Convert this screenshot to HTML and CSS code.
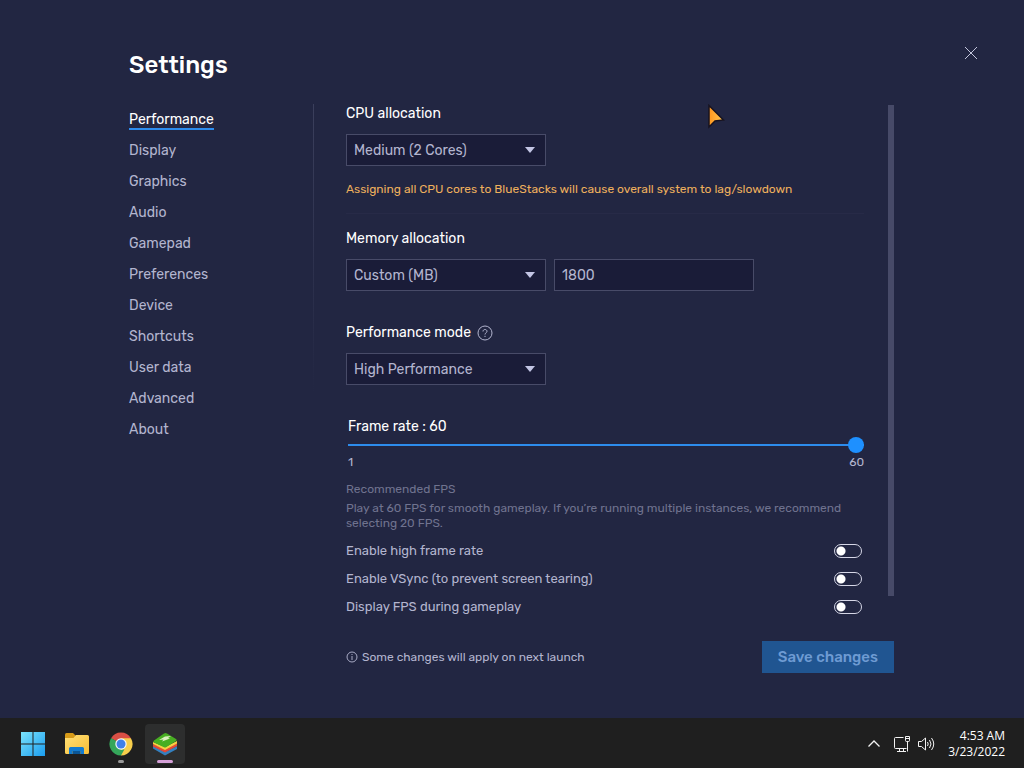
FILE: index.html
```html
<!DOCTYPE html>
<html lang="en">
<head>
    <meta charset="UTF-8">
    <meta name="viewport" content="width=device-width, initial-scale=1.0">
    <title>Settings</title>
    <link rel="stylesheet" href="styles.css">
</head>
<body>
    <main class="window">
        <header class="window-header">
            <h1>Settings</h1>
            <button class="close-button" aria-label="Close">
                <svg width="14" height="14" viewBox="0 0 14 14"><path d="M1 1l12 12M13 1L1 13" stroke="#c3c5dc" fill="none"/></svg>
            </button>
        </header>

        <div class="settings">
            <!-- Section list -->
            <nav class="sidebar">
                <ul>
                    <li><a href="#performance" class="active">Performance</a></li>
                    <li><a href="#display">Display</a></li>
                    <li><a href="#graphics">Graphics</a></li>
                    <li><a href="#audio">Audio</a></li>
                    <li><a href="#gamepad">Gamepad</a></li>
                    <li><a href="#preferences">Preferences</a></li>
                    <li><a href="#device">Device</a></li>
                    <li><a href="#shortcuts">Shortcuts</a></li>
                    <li><a href="#user-data">User data</a></li>
                    <li><a href="#advanced">Advanced</a></li>
                    <li><a href="#about">About</a></li>
                </ul>
            </nav>

            <div class="separator"></div>

            <div class="panel">
                <div class="panel-scroll">
                    <form class="options" id="performance">
                        <section class="group group-cpu">
                            <label class="title" for="cpu">CPU allocation</label>
                            <div class="fields">
                                <select id="cpu"><option>Medium (2 Cores)</option></select>
                            </div>
                            <p class="warning">Assigning all CPU cores to BlueStacks will cause overall system to lag/slowdown</p>
                        </section>

                        <section class="group">
                            <label class="title" for="memory">Memory allocation</label>
                            <div class="fields">
                                <select id="memory"><option>Custom (MB)</option></select>
                                <input type="text" value="1800" aria-label="Memory in MB">
                            </div>
                        </section>

                        <section class="group">
                            <div class="title-row">
                                <label class="title" for="mode">Performance mode</label>
                                <svg width="16" height="16" viewBox="0 0 16 16" fill="none" stroke="#b3b5cf">
                                    <circle cx="8" cy="8" r="7"/>
                                    <path d="M6 6.5c0-1.3.9-2 2-2s2 .7 2 1.8c0 1.5-2 1.500-2 3.200M8 10.800v1.200"/>
                                </svg>
                            </div>
                            <div class="fields">
                                <select id="mode"><option>High Performance</option></select>
                            </div>
                        </section>

                        <section class="frame-rate">
                            <label class="title" for="fps">Frame rate : 60</label>
                            <input type="range" id="fps" min="1" max="60" value="60">
                            <div class="range-limits"><span>1</span><span>60</span></div>
                        </section>

                        <section class="hint">
                            <h2>Recommended FPS</h2>
                            <p>Play at 60 FPS for smooth gameplay. If you’re running multiple instances, we recommend selecting 20 FPS.</p>
                        </section>

                        <section class="toggles">
                            <label>Enable high frame rate <input type="checkbox"></label>
                            <label>Enable VSync (to prevent screen tearing) <input type="checkbox"></label>
                            <label>Display FPS during gameplay <input type="checkbox"></label>
                        </section>
                    </form>
                    <div class="scrollbar"></div>
                </div>

                <footer class="panel-footer">
                    <p class="note">
                        <svg width="12" height="12" viewBox="0 0 12 12" fill="none" stroke="#a9abc6">
                            <circle cx="6" cy="6" r="5"/>
                            <path d="M6 5v4M6 3v1"/>
                        </svg>
                        Some changes will apply on next launch
                    </p>
                    <button class="save-button">Save changes</button>
                </footer>
            </div>
        </div>

        <svg class="cursor" width="18" height="25" viewBox="0 0 18 25">
            <defs>
                <linearGradient id="cursor-fill" x2="1" y2="0"><stop stop-color="#ff961e"/><stop offset="1" stop-color="#ffc751"/></linearGradient>
            </defs>
            <path d="M2 1.500L16.500 16L8 17L2 23z" fill="url(#cursor-fill)" stroke="#171321" stroke-width="1.500"/>
        </svg>
    </main>

    <!-- Taskbar -->
    <div class="taskbar">
        <div class="apps">
            <button class="app" aria-label="Start">
                <svg width="24" height="24" viewBox="0 0 24 24">
                    <defs><linearGradient id="win" x2="1" y2="1"><stop stop-color="#7be3fb"/><stop offset="1" stop-color="#1a9df0"/></linearGradient></defs>
                    <path d="M0 0h11.500v11.500H0zM12.500 0H24v11.500H12.500zM0 12.500h11.500V24H0zM12.500 12.500H24V24H12.500z" fill="url(#win)"/>
                </svg>
            </button>
            <button class="app" aria-label="File Explorer">
                <svg width="26" height="24" viewBox="0 0 26 24">
                    <defs><linearGradient id="folder" x2="1" y2="1"><stop stop-color="#ffe077"/><stop offset="1" stop-color="#f7bd35"/></linearGradient></defs>
                    <path d="M1 6V2.500Q1 1 2.500 1H9l3 3v4H1z" fill="#d79b18"/>
                    <path d="M1 6h8.500L12 3h11.500Q25 3 25 4.500V20.500Q25 22 23.500 22H2.500Q1 22 1 20.500z" fill="url(#folder)"/>
                    <path d="M5 22v-5.500Q5 15 6.500 15h12Q20 15 20 16.500V22h-3.500v-3h-8v3z" fill="#127bd0"/>
                    <path d="M8.500 22v-3h8v3z" fill="#0b5696"/>
                </svg>
            </button>
            <button class="app running" aria-label="Google Chrome">
                <svg width="24" height="24" viewBox="0 0 24 24">
                    <path d="M12 12L2.040 6.250A11.500 11.500 0 0 1 21.960 6.250z" fill="#d94f45"/>
                    <path d="M12 12L2.040 6.250A11.500 11.500 0 0 0 12 23.500z" fill="#35a65a"/>
                    <path d="M12 12V23.500A11.500 11.500 0 0 0 21.960 6.250z" fill="#f7ce4b"/>
                    <path d="M12 6.250h9.960L17 14.900z" fill="#f7ce4b"/>
                    <path d="M2.040 6.250L7 14.900L12 12z" fill="#35a65a"/>
                    <path d="M12 23.500L17 14.900L12 12z" fill="#f7ce4b"/>
                    <path d="M7 14.900L12 17.800L15.500 17.200L12 23.500z" fill="#35a65a"/>
                    <circle cx="12" cy="12" r="5.700" fill="#f4f7fb"/>
                    <circle cx="12" cy="12" r="4.500" fill="#3f80e8"/>
                </svg>
            </button>
            <button class="app running current" aria-label="BlueStacks">
                <svg width="26" height="24" viewBox="0 0 26 24">
                    <path d="M1 14v2.500l12 7 12-6.500v-3l-12 6z" fill="#3480bf"/>
                    <path d="M1 12v2.500l12 6 12-6.500v-3l-12 6z" fill="#e54a35"/>
                    <path d="M1 10v2l12 6 12-6.500V9l-12 6z" fill="#f6d143"/>
                    <path d="M12 1.500q1.500-.8 3 0L24 7q1.500 1 0 2l-10 6.200q-1 .6-2 0L2 10.500q-1.500-1 0-2z" fill="#48ae22"/>
                    <path d="M7 8l6-3.500 6-.5-3 2 2 .5-8 3 1.500-2z" fill="#dcf0c0"/>
                </svg>
            </button>
        </div>

        <div class="tray">
            <button class="tray-button" aria-label="Show hidden icons">
                <svg width="12" height="8" viewBox="0 0 12 8"><path d="M.5 6.500L6 1l5.500 5.500" stroke="#f2f2f2" stroke-width="1.300" fill="none"/></svg>
            </button>
            <button class="tray-button tray-status" aria-label="Network and volume">
                <svg width="18" height="18" viewBox="0 0 18 18" fill="none" stroke="#f2f2f2">
                    <path d="M10.500 2.500h-8q-1 0-1 1v9q0 1 1 1h11M4 16.500h9M6.500 13.500v3M10.500 13.500v3"/>
                    <path d="M12.500 1.500h4v4q0 1-1 1h-2q-1 0-1-1zM12.500 3.500h4M14.500 6.500v10"/>
                </svg>
                <svg width="18" height="18" viewBox="0 0 18 18" fill="none" stroke="#f2f2f2">
                    <path d="M1.500 6.500h3L8.500 3v12l-4-3.500h-3z" stroke-linejoin="round"/>
                    <path d="M10.500 7q1.400 2 0 4M12.500 5q3 4 0 8M14.500 3q4.500 6 0 12"/>
                </svg>
            </button>
            <div class="clock">
                <div>4:53 AM</div>
                <div>3/23/2022</div>
            </div>
        </div>
    </div>
</body>
</html>
```
FILE: styles.css
```css
* {
    box-sizing: border-box;
}

body {
    margin: 0;
    min-height: 100vh;
    display: flex;
    flex-direction: column;
    background: #222642;
    color: #b3b5cf;
    font-family: "Rubik", "Roboto", sans-serif;
    font-size: 14px;
    line-height: 20px;
}

h1, h2, p, ul {
    margin: 0;
    padding: 0;
}

button {
    padding: 0;
    border: none;
    background: none;
    color: inherit;
    font: inherit;
    cursor: pointer;
}

svg {
    display: block;
}

.window {
    position: relative;
    flex: 1;
    padding: 38px 38px 40px 129px;
}

/* Header */
.window-header {
    display: flex;
    justify-content: space-between;
    align-items: flex-start;
    height: 66px;
}

h1 {
    padding-top: 11px;
    color: #fff;
    font-size: 24px;
    font-weight: 500;
    line-height: 32px;
}

.close-button {
    width: 30px;
    height: 30px;
    display: grid;
    place-items: center;
}

/* Section list and panel */
.settings {
    display: flex;
    padding-right: 92px;
}

.sidebar {
    width: 184px;
    flex-shrink: 0;
}

.sidebar ul {
    list-style: none;
}

.sidebar li {
    height: 31px;
    padding-top: 6px;
}

.sidebar a {
    display: inline-block;
    height: 20px;
    color: inherit;
    text-decoration: none;
}

.sidebar a.active {
    color: #fff;
    border-bottom: 2px solid #2d8ced;
}

.separator {
    width: 1px;
    margin-right: 32px;
    background: linear-gradient(#3b3f5c, #222642 288px);
}

.panel {
    flex: 1;
    min-width: 0;
}

.panel-scroll {
    display: flex;
    justify-content: space-between;
    gap: 24px;
}

.options {
    flex: 1;
}

.scrollbar {
    width: 6px;
    height: 491px;
    margin-top: 1px;
    background: #474a68;
}

/* Form groups */
.group {
    margin-bottom: 32px;
}

.group-cpu {
    margin-bottom: 15px;
    padding-bottom: 15px;
    border-bottom: 1px solid #272a47;
}

.title {
    display: block;
    color: #fff;
}

.title-row {
    display: flex;
    align-items: center;
    gap: 6px;
}

.fields {
    display: flex;
    gap: 8px;
    margin-top: 10px;
}

select,
input[type="text"] {
    width: 200px;
    height: 32px;
    padding: 0 7px;
    border: 1px solid #484b68;
    border-radius: 0;
    background-color: #1a1c38;
    color: #b3b5cf;
    font: inherit;
    outline: none;
}

select {
    appearance: none;
    padding-top: 2px;
    background-image: url("data:image/svg+xml,%3Csvg xmlns='http://www.w3.org/2000/svg' width='10' height='6'%3E%3Cpath d='M0 0h10L5 6z' fill='%23c3c5e4'/%3E%3C/svg%3E");
    background-repeat: no-repeat;
    background-position: right 10px center;
}

.warning {
    margin-top: 14px;
    color: #eeb05d;
    font-size: 12px;
    line-height: 18px;
}

/* Frame rate slider */
.frame-rate {
    padding-left: 2px;
}

input[type="range"] {
    appearance: none;
    display: block;
    width: 100%;
    height: 16px;
    margin: 0;
    background: linear-gradient(#2d8ced, #2d8ced) center / 100% 2px no-repeat;
}

input[type="range"]::-webkit-slider-thumb {
    appearance: none;
    width: 16px;
    height: 16px;
    border-radius: 50%;
    background: #1e90ff;
}

.range-limits {
    display: flex;
    justify-content: space-between;
    font-size: 12px;
    line-height: 18px;
}

.hint {
    margin-top: 11px;
    color: #70738f;
    font-size: 12px;
    line-height: 15px;
}

.hint h2 {
    margin-bottom: 4px;
    font-size: 12px;
    font-weight: 400;
}

.toggles {
    margin-top: 6px;
    padding-right: 2px;
    font-size: 13px;
}

.toggles label {
    display: flex;
    justify-content: space-between;
    align-items: center;
    height: 28px;
}

input[type="checkbox"] {
    appearance: none;
    width: 28px;
    height: 14px;
    margin: 0;
    border: 1px solid #d5d6e6;
    border-radius: 7px;
    background: radial-gradient(circle at 6px 6px, #fff 4px, transparent 5px);
}

input[type="checkbox"]:checked {
    background: radial-gradient(circle at 20px 6px, #fff 4px, #2d8ced 5px);
}

/* Panel footer */
.panel-footer {
    display: flex;
    justify-content: space-between;
    align-items: center;
    margin-top: 20px;
}

.note {
    display: flex;
    align-items: center;
    gap: 4px;
    font-size: 12px;
}

.save-button {
    height: 32px;
    padding: 0 16px;
    background: #205591;
    color: #6e9bd3;
    font-size: 15px;
    font-weight: 500;
}

.cursor {
    position: absolute;
    left: 707px;
    top: 104px;
}

/* Taskbar */
.taskbar {
    display: flex;
    justify-content: space-between;
    height: 50px;
    padding: 2px 19px 0 13px;
    background: #1f1f1f;
    color: #fff;
}

.apps {
    display: flex;
    align-items: center;
    gap: 4px;
}

.app {
    position: relative;
    width: 40px;
    height: 40px;
    display: grid;
    place-items: center;
    border-radius: 4px;
}

.app.current {
    background: #2d2e2e;
}

.app.running::after {
    content: "";
    position: absolute;
    bottom: 1px;
    left: 17px;
    width: 6px;
    height: 3px;
    border-radius: 2px;
    background: #999;
}

.app.current::after {
    left: 12px;
    width: 16px;
    background: #d6a1d9;
}

.tray {
    display: flex;
    align-items: center;
    gap: 13px;
}

.tray-status {
    display: flex;
    gap: 6px;
}

.clock {
    font-family: "Open Sans", "Noto Sans", sans-serif;
    font-size: 12px;
    line-height: 16px;
    text-align: right;
}
```
